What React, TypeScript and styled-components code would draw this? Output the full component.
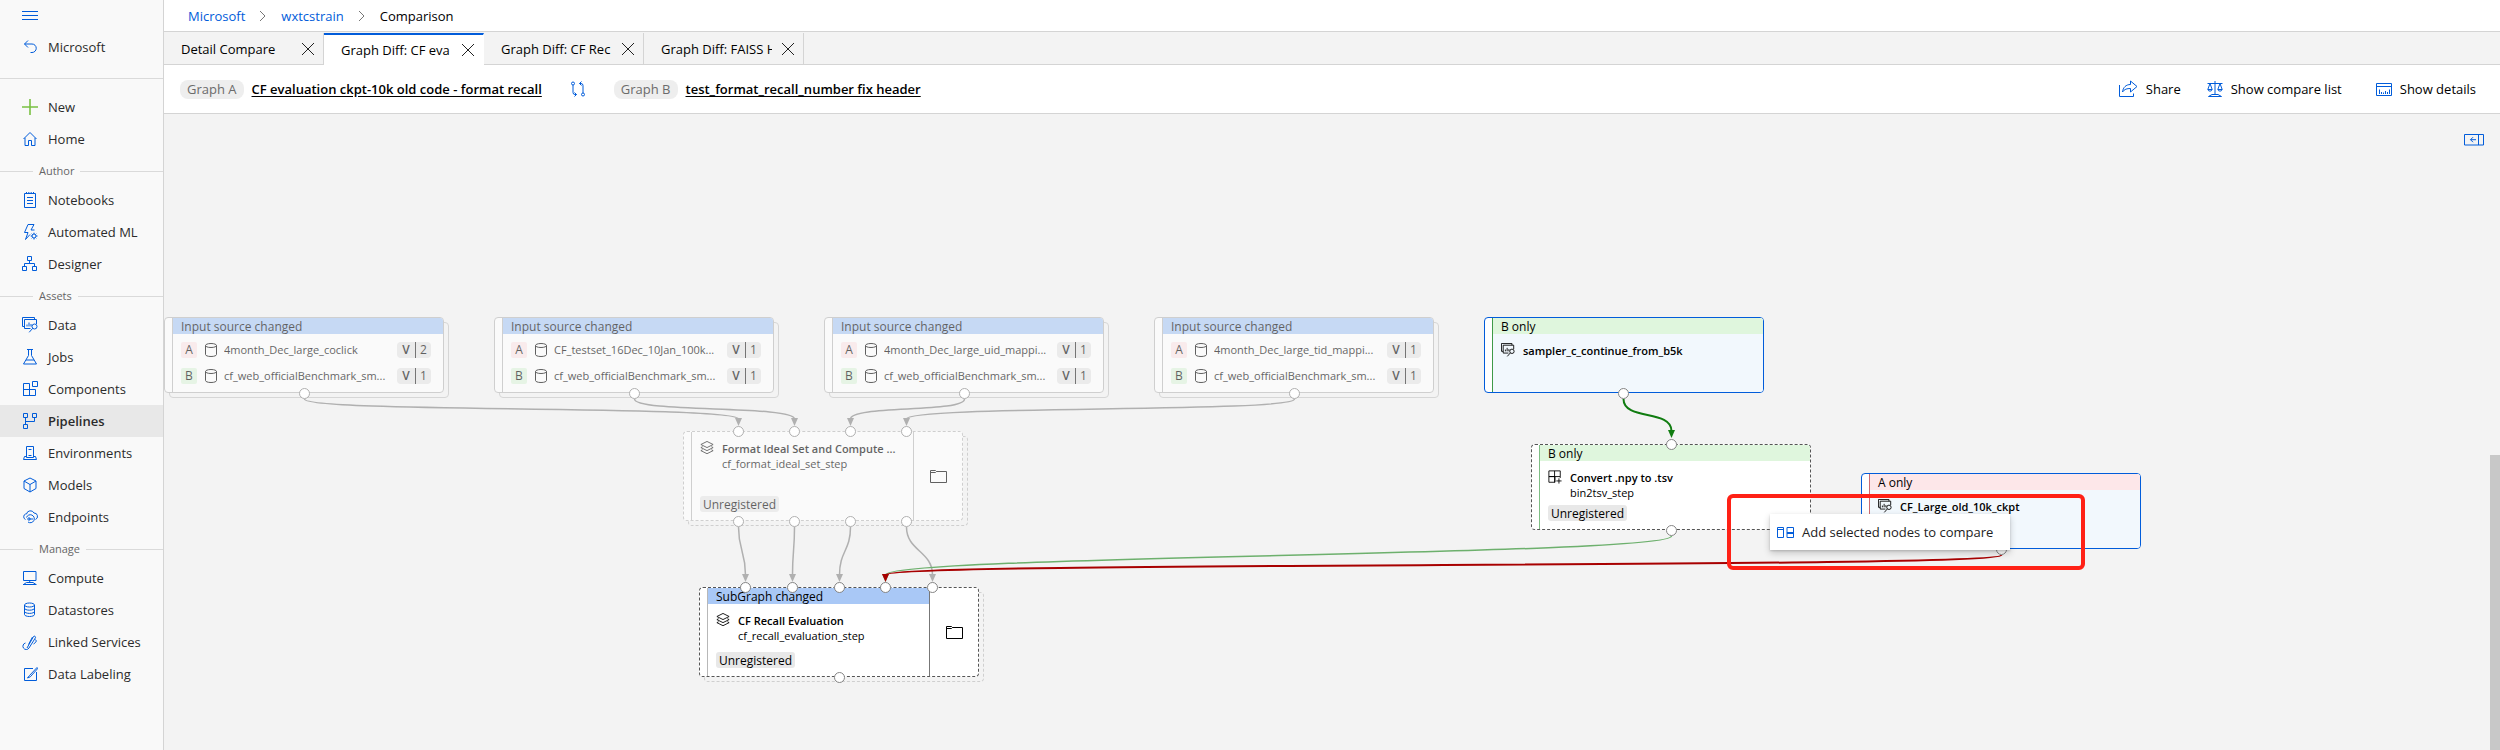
import React from "react";
import styled, { createGlobalStyle, css } from "styled-components";

const GlobalStyle = createGlobalStyle`
  *, *::before, *::after { box-sizing: border-box; }
  body {
    margin: 0;
    background: #f3f3f3;
    color: #000;
    font-family: "Segoe UI", "Open Sans", "Noto Sans", sans-serif;
    font-size: 13px;
    line-height: 20px;
  }
  a { color: inherit; text-decoration: none; }
  button {
    margin: 0;
    padding: 0;
    border: 0;
    background: none;
    color: inherit;
    font: inherit;
    cursor: pointer;
  }
  svg { display: block; flex: none; }
`;

/* ---------- icons ---------- */

const glyphs: Record<string, React.ReactNode> = {
  menu: <path d="M0 3.5h16M0 7.5h16M0 11.5h16" />,
  back: <path d="M6 1.5 2.5 5 6 8.5M2.5 5H10a4 4 0 0 1 0 8.500H8.500" />,
  plus: <path d="M8 0v16M0 8h16" strokeWidth="1.600" />,
  home: <path d="M1.500 8 8 1.500 14.500 8M3 6.800v7.700h3.500V9.500h3v5H13V6.800" />,
  notebook: (
    <path d="M2.500 1.500h11v14h-11zM4.500 0v2M6.800 0v2M9.200 0v2M11.500 0v2M5 5.500h6M5 8.500h6M5 11.500h6" />
  ),
  bolt: (
    <>
      <path d="M6 .5h6L9 6h3.500M6 .5 2.500 8.500H6L3.500 15.500 8 10.500" />
      <circle cx="12" cy="12" r="2" />
      <path d="M12 8.700v1.300M12 14v1.500M8.700 12H10M14 12h1.500M9.700 9.700l.8.8M13.500 13.500l.8.8M14.300 9.700l-.8.8M10.500 13.500l-.8.8" />
    </>
  ),
  designer: (
    <path d="M5.500.5h4v4h-4zM.5 10.500h4v4h-4zM10.500 10.500h4v4h-4zM7.500 4.500v3M2.500 10.500v-3h10v3" />
  ),
  data: (
    <>
      <path d="M2.500 9.500h-2v-9h12v2" />
      <path d="M8.500 11.500h-6v-9h12v4.500M5 9.500V7.500M7 9.500V5.500M9 9.500V7" />
      <circle cx="12.500" cy="9.500" r="2.500" />
      <path d="m10.700 11.300-3.500 4" />
    </>
  ),
  flask: <path d="M5 .5h6M6.500.5v6L1.500 15h13L9.500 6.500v-6M4 11h8" />,
  components: <path d="M1.500 2.500h6v12h-6zM1.500 8.500h12v6h-12zM10.500.5h5v5h-5z" />,
  pipelines: (
    <path d="M1.500.5h4v4h-4zM10.500.5h4v4h-4zM1.500 11.500h4v4h-4zM3.500 4.500v7M12.500 4.500v4h-9" />
  ),
  server: <path d="M4.500 1.500h7v11h-7zM6.500 4.500h3M6.500 10.500h3M4.500 11.500h-2l-1 3h13l-1-3h-2" />,
  cube: <path d="M8 1 14 4v7.500L8 15l-6-3.500V4zM2 4l6 3.500L14 4M8 7.500V15" />,
  cloud: (
    <>
      <path d="M3.500 10.500a3 3 0 0 1 0-5.500h1a4 4 0 0 1 7.500-1 3.400 3.400 0 0 1 1.500 6.500" />
      <path d="M4.500 8.500a4 4 0 1 1 1.500 4.500" />
      <circle cx="7" cy="10" r="1.200" />
      <path d="M7 10h4" />
    </>
  ),
  compute: <path d="M1.500 1.500h12.500v9H1.500zM7.700 10.500v2M1.500 14.500l3-2h6.500l3 2M1 14.500h13.500" />,
  datastore: (
    <path d="M2.500 3c0-1 2-2 5-2s5 1 5 2-2 2-5 2-5-1-5-2v9.500c0 1 2 2 5 2s5-1 5-2V3M2.500 6.200c0 1 2 2 5 2s5-1 5-2M2.500 9.400c0 1 2 2 5 2s5-1 5-2" />
  ),
  link: (
    <>
      <path d="M5 14 11.500 2.500a1.200 1.200 0 0 1 2 1.200L7 14a3.300 3.300 0 1 1-3.500-5" />
      <path d="M6.500 10.500 10.500 3M11.500 10l2-1.500a2 2 0 0 0 0-3" />
    </>
  ),
  label: <path d="M11 2.500H2.500v12h12V6M15 1.500l-7.500 8-2 2.500 2.800-1.200 7.200-8z" />,
  swap: (
    <>
      <circle cx="3" cy="2.500" r="1.500" />
      <circle cx="13" cy="13.500" r="1.500" />
      <path d="M3 4v7.500q0 2 2 2h1.500M4.500 11.500l2 2-2 2M13 12V4.500q0-2-2-2H9.500M11.500.5l-2 2 2 2" />
    </>
  ),
  scale: (
    <path d="M8 0v14M.5 2.500h15M3 2.500.8 8.500a2.300 2.300 0 0 0 4.400 0zM13 2.500l-2.200 6a2.300 2.300 0 0 0 4.400 0zM1 8.500h4M11 8.500h4M5 13.500 1.500 15.500h13L11 13.500z" />
  ),
  details: (
    <path d="M.5 2.500h15v12H.5zM.5 5.500h15M3.500 13V8.500M5.500 13v-2M7.500 13v-1.500M9.500 13v-3M11.500 13v-2M13.500 13V8.500" />
  ),
  close: <path d="m2 2 12 12M14 2 2 14" />,
  chevron: <path d="m5 3 5 5-5 5" />,
  cylinder: (
    <path d="M2.500 3.500c0-1 2-2 5.500-2s5.500 1 5.500 2-2 2-5.500 2-5.500-1-5.500-2v9c0 1 2 2 5.500 2s5.500-1 5.500-2v-9" />
  ),
  layers: (
    <path d="m8 .5 7 3.500-7 3.500L1 4zM3 6.500 1 7.500l7 3.500 7-3.500-2-1M3 10l-2 1 7 3.500L15 11l-2-1" />
  ),
  component: <path d="M1 1h13v6.500H1zM1 7.500h7V14H1zM7.500 1v13M14 7.500v1.500M12.500 9.500v6M9.500 12.500h6" />,
};

const Icon = ({ name, size = 16 }: { name: string; size?: number }) => (
  <svg width={size} height={size} viewBox="0 0 16 16" fill="none" stroke="currentColor" aria-hidden="true">
    {glyphs[name]}
  </svg>
);

const ShareIcon = () => (
  <svg width="20" height="18" viewBox="0 0 20 18" fill="none" stroke="currentColor" aria-hidden="true">
    <path d="M1.500 5v11.500h14v-3M4.500 12c.5-4.500 3.500-7.500 8-7.500V1L19 6.500 12.500 12V8.500c-3.500 0-6 .5-8 3.500z" />
  </svg>
);

const DockIcon = () => (
  <svg width="20" height="12" viewBox="0 0 20 12" fill="none" stroke="currentColor" aria-hidden="true">
    <path d="M.5.5h19v10.500H.5zM14.500.5v10.500M12 5.700H6.500M9 3.200 6.500 5.700 9 8.200" />
  </svg>
);

const CompareIcon = () => (
  <svg width="17" height="11" viewBox="0 0 17 11" fill="none" stroke="currentColor" aria-hidden="true">
    <path d="M.5.5h6v10h-6zM.5 2.500h6M10 .5h6.500v10H10zM10 5.500h6.500M10 6.500h6.500" />
  </svg>
);

const FolderIcon = () => (
  <svg width="17" height="13" viewBox="0 0 17 13" fill="none" stroke="currentColor" aria-hidden="true">
    <path d="M.5 12.500V.5h5l1 1h10v11zM.5 2.500h5l1-1" />
  </svg>
);

/* ---------- page frame ---------- */

const Page = styled.div`
  display: flex;
  min-height: 100vh;
`;

const Sidebar = styled.nav`
  flex: none;
  width: 164px;
  background: #f9f9f9;
  border-right: 1px solid #d4d4d4;
  color: #2b2b2b;
`;

const navRow = css`
  display: flex;
  align-items: center;
  gap: 10px;
  width: 100%;
  height: 32px;
  padding-left: 22px;
`;

const MenuToggle = styled.button`
  ${navRow}
  height: 31px;
  color: #015cda;
`;

const NavLink = styled.a<{ $current?: boolean; $accent?: string }>`
  ${navRow}
  font-weight: ${(p) => (p.$current ? 600 : 400)};
  background: ${(p) => (p.$current ? "#e8e8e8" : "transparent")};
  svg { color: ${(p) => p.$accent || "#015cda"}; }
`;

const NavRule = styled.hr`
  height: 1px;
  margin: 15px 0 12px;
  border: 0;
  background: #dadada;
`;

const NavGroup = styled.h2`
  display: flex;
  align-items: center;
  gap: 6px;
  height: 29px;
  margin: 0;
  padding-top: 3px;
  font-size: 11px;
  font-weight: 400;
  color: #666;
  &::before, &::after { content: ""; height: 1px; background: #dadada; }
  &::before { width: 33px; }
  &::after { flex: 1; }
`;

const Main = styled.main`
  display: flex;
  flex: 1;
  flex-direction: column;
  min-width: 0;
`;

const Breadcrumb = styled.nav`
  display: flex;
  align-items: center;
  gap: 10px;
  height: 32px;
  padding-left: 24px;
  background: #fff;
  border-bottom: 1px solid #d4d4d4;
  a { color: #015cda; }
  svg { color: #777; }
`;

const TabStrip = styled.div`
  display: flex;
  height: 33px;
  padding-top: 1px;
  background: #f3f3f3;
  border-bottom: 1px solid #d4d4d4;
`;

const Tab = styled.div<{ $active?: boolean }>`
  display: flex;
  align-items: center;
  justify-content: space-between;
  width: 160px;
  height: 32px;
  padding: 0 7px 0 17px;
  border-right: 1px solid #d4d4d4;
  ${(p) =>
    p.$active &&
    css`
      background: #fff;
      border-top: 2px solid #015cda;
      border-right-color: #fff;
    `}
`;

const TabLabel = styled.button`
  width: 111px;
  overflow: hidden;
  text-align: left;
  white-space: nowrap;
`;

const CloseButton = styled.button`
  color: #222;
`;

const Toolbar = styled.header`
  display: flex;
  align-items: center;
  height: 49px;
  padding: 0 24px 0 16px;
  background: #fff;
  border-bottom: 1px solid #d4d4d4;
`;

const GraphTag = styled.span`
  height: 19px;
  margin-right: 8px;
  padding: 0 7px;
  border-radius: 8px;
  background: #eee;
  color: #6b6b6b;
  line-height: 19px;
`;

const GraphName = styled.a`
  font-weight: 600;
  text-decoration: underline;
  text-underline-offset: 2px;
`;

const SwapButton = styled.button`
  margin: 0 28px;
  color: #015cda;
`;

const Actions = styled.div`
  display: flex;
  gap: 26px;
  margin-left: auto;
`;

const ActionButton = styled.button`
  display: flex;
  align-items: center;
  gap: 8px;
  svg { color: #015cda; }
  &:last-child { margin-left: 8px; }
`;

/* ---------- graph canvas ---------- */

const Canvas = styled.section`
  position: relative;
  flex: 1;
  min-height: 636px;
  overflow: hidden;
  background: #f3f3f3;
`;

const Edges = styled.svg`
  position: absolute;
  inset: 0;
  width: 100%;
  height: 100%;
`;

const DockButton = styled.button`
  position: absolute;
  top: 20px;
  right: 16px;
  color: #015cda;
`;

const ScrollThumb = styled.div`
  position: absolute;
  top: 341px;
  right: 0;
  bottom: 0;
  width: 10px;
  background: #c8c8c8;
`;

type Look = "plain" | "step" | "selected";

const NodeFrame = styled.article<{ $x: number; $y: number; $h: number }>`
  position: absolute;
  left: ${(p) => p.$x}px;
  top: ${(p) => p.$y}px;
  width: 280px;
  height: ${(p) => p.$h}px;
  font-size: 11px;
  line-height: 16px;
`;

const NodeShadow = styled.div<{ $dashed: boolean }>`
  position: absolute;
  inset: 5px -5px -5px 5px;
  border: ${(p) => (p.$dashed ? "1px dashed #cfcfcf" : "1px solid #d6d6d6")};
  border-radius: 4px;
`;

const borders: Record<Look, string> = {
  plain: "1px solid #b8b8b8",
  step: "1px dashed #555",
  selected: "1px solid #015cda",
};

const NodeCard = styled.div<{ $look: Look; $muted?: boolean; $accent: string }>`
  position: relative;
  display: flex;
  height: 100%;
  overflow: hidden;
  border: ${(p) => (p.$muted && p.$look === "step" ? "1px dashed #b8b8b8" : borders[p.$look])};
  border-radius: 4px;
  background: #fff;
  opacity: ${(p) => (p.$muted ? 0.6 : 1)};
  &::before { content: ""; width: 8px; border-right: 1px solid ${(p) => p.$accent}; }
`;

const MutedBack = styled.div`
  position: absolute;
  inset: 0;
  border-radius: 4px;
  background: #f3f3f3;
`;

const NodeMain = styled.div<{ $selected: boolean }>`
  display: flex;
  flex: 1;
  flex-direction: column;
  min-width: 0;
  background: ${(p) => (p.$selected ? "#f2f8fd" : "transparent")};
`;

const NodeHeader = styled.h3<{ $tint: string }>`
  height: 16px;
  margin: 0;
  padding-left: 8px;
  background: ${(p) => p.$tint};
  font-size: 12px;
  font-weight: 400;
  line-height: 18px;
`;

const NodeBody = styled.div`
  display: flex;
  flex: 1;
  flex-direction: column;
  justify-content: space-between;
  padding: 9px 0 8px 8px;
`;

const Heading = styled.div`
  display: flex;
  gap: 8px;
  line-height: 15px;
  white-space: nowrap;
  strong { display: block; font-weight: 600; }
`;

const StatusTag = styled.span`
  align-self: flex-start;
  height: 16px;
  padding: 0 3px;
  border-radius: 3px;
  background: #e8e8e8;
  font-size: 12px;
  line-height: 18px;
`;

const SourceList = styled.div`
  display: grid;
  gap: 10px;
  padding: 8px 12px 0 8px;
`;

const SourceRow = styled.div`
  display: flex;
  align-items: center;
  height: 16px;
`;

const SideBadge = styled.span<{ $side: "A" | "B" }>`
  width: 16px;
  margin-right: 6px;
  border-radius: 2px;
  background: ${(p) => (p.$side === "A" ? "#fde7e9" : "#dff6dd")};
  font-size: 12px;
  text-align: center;
`;

const SourceName = styled.span`
  flex: 1;
  margin-left: 5px;
  overflow: hidden;
  white-space: nowrap;
`;

const Version = styled.span`
  display: flex;
  border-radius: 4px;
  background: #e6e6e6;
  font-size: 12px;
  b { width: 18px; text-align: center; font-weight: 600; }
  span { width: 16px; border-left: 1px solid #222; text-align: center; }
`;

const OpenPanel = styled.button<{ $muted?: boolean }>`
  display: flex;
  align-items: center;
  justify-content: center;
  width: 49px;
  border-left: 1px solid ${(p) => (p.$muted ? "#b8b8b8" : "#777")};
`;

const Port = styled.span<{ $x: number; $y: number; $muted?: boolean }>`
  position: absolute;
  left: ${(p) => p.$x - 5}px;
  top: ${(p) => p.$y - 5}px;
  width: 11px;
  height: 11px;
  border: 1px solid ${(p) => (p.$muted ? "#b0b0b0" : "#858585")};
  border-radius: 50%;
  background: #fff;
`;

const Selection = styled.div`
  position: absolute;
  left: 1563px;
  top: 380px;
  width: 358px;
  height: 76px;
  border: 4px solid #ff2116;
  border-radius: 6px;
`;

const ContextMenu = styled.div`
  position: absolute;
  left: 1606px;
  top: 400px;
  width: 240px;
  background: #fff;
  box-shadow: 0 3px 7px rgba(0, 0, 0, 0.2), 0 1px 2px rgba(0, 0, 0, 0.15);
  button {
    display: flex;
    align-items: center;
    gap: 8px;
    width: 100%;
    height: 36px;
    padding-left: 7px;
    color: #222;
  }
  svg { color: #015cda; }
`;

/* ---------- data ---------- */

type Source = { name: string; version: number };
type GraphNode = {
  x: number;
  y: number;
  h: number;
  look: Look;
  muted?: boolean;
  stacked?: boolean;
  header?: string;
  tint?: string;
  accent?: string;
  sources?: Source[];
  icon?: string;
  title?: string;
  step?: string;
  expandable?: boolean;
  inputs?: number[];
  outputs: number[];
};

const benchmark = { name: "cf_web_officialBenchmark_sm...", version: 1 };
const sourceNode = (x: number, name: string, version: number): GraphNode => ({
  x,
  y: 203,
  h: 76,
  look: "plain",
  muted: true,
  stacked: true,
  header: "Input source changed",
  tint: "#a9c8f6",
  sources: [{ name, version }, benchmark],
  outputs: [140],
});

const nodes: GraphNode[] = [
  sourceNode(0, "4month_Dec_large_coclick", 2),
  sourceNode(330, "CF_testset_16Dec_10Jan_100k...", 1),
  sourceNode(660, "4month_Dec_large_uid_mappi...", 1),
  sourceNode(990, "4month_Dec_large_tid_mappi...", 1),
  {
    x: 1320, y: 203, h: 76, look: "selected", header: "B only", tint: "#dff6dd", accent: "#3f9a48",
    icon: "data", title: "sampler_c_continue_from_b5k", outputs: [139],
  },
  {
    x: 1367, y: 330, h: 86, look: "step", header: "B only", tint: "#dff6dd", accent: "#7fbf85",
    icon: "component", title: "Convert .npy to .tsv", step: "bin2tsv_step", inputs: [140], outputs: [140],
  },
  {
    x: 1697, y: 359, h: 76, look: "selected", header: "A only", tint: "#fde7e9", accent: "#cc6a70",
    icon: "data", title: "CF_Large_old_10k_ckpt", outputs: [140],
  },
  {
    x: 519, y: 317, h: 90, look: "step", muted: true, stacked: true, icon: "layers",
    title: "Format Ideal Set and Compute ...", step: "cf_format_ideal_set_step", expandable: true,
    inputs: [55, 111, 167, 223], outputs: [55, 111, 167, 223],
  },
  {
    x: 535, y: 473, h: 90, look: "step", stacked: true, header: "SubGraph changed", tint: "#a9c8f6",
    icon: "layers", title: "CF Recall Evaluation", step: "cf_recall_evaluation_step", expandable: true,
    inputs: [46, 93, 140, 186, 233], outputs: [140],
  },
];

type Edge = { from: [number, number]; to: [number, number]; bend: number; color: string; width?: number };

const grey = "#b0b0b0";
const edges: Edge[] = [
  { from: [140, 285], to: [574, 305], bend: 14, color: grey },
  { from: [470, 285], to: [630, 305], bend: 14, color: grey },
  { from: [800, 285], to: [686, 305], bend: 14, color: grey },
  { from: [1130, 285], to: [742, 305], bend: 14, color: grey },
  { from: [574, 413], to: [581, 461], bend: 24, color: grey },
  { from: [630, 413], to: [628, 461], bend: 24, color: grey },
  { from: [686, 413], to: [675, 461], bend: 24, color: grey },
  { from: [742, 413], to: [768, 461], bend: 24, color: grey },
  { from: [1459, 285], to: [1507, 317], bend: 22, color: "#107c10", width: 2 },
  { from: [1507, 422], to: [721, 461], bend: 20, color: "#6db06d" },
  { from: [1837, 441], to: [721, 461], bend: 14, color: "#a80000", width: 2 },
];

const navGroups = [
  {
    label: "Author",
    items: [["notebook", "Notebooks"], ["bolt", "Automated ML"], ["designer", "Designer"]],
  },
  {
    label: "Assets",
    items: [
      ["data", "Data"], ["flask", "Jobs"], ["components", "Components"], ["pipelines", "Pipelines"],
      ["server", "Environments"], ["cube", "Models"], ["cloud", "Endpoints"],
    ],
  },
  {
    label: "Manage",
    items: [
      ["compute", "Compute"], ["datastore", "Datastores"], ["link", "Linked Services"], ["label", "Data Labeling"],
    ],
  },
];

const tabs = ["Detail Compare", "Graph Diff: CF eva", "Graph Diff: CF Rec", "Graph Diff: FAISS H"];

/* ---------- components ---------- */

const EdgeLine = ({ from, to, bend, color, width = 1.5 }: Edge) => (
  <g>
    <path
      d={`M${from[0] + 0.5} ${from[1]}C${from[0] + 0.5} ${from[1] + bend} ${to[0] + 0.5} ${to[1] - bend} ${to[0] + 0.5} ${to[1]}`}
      fill="none"
      stroke={color}
      strokeWidth={width}
    />
    <path d={`M${to[0] - 3} ${to[1] - 1}h7l-3.500 8z`} fill={color} />
  </g>
);

const NodeView = ({ node }: { node: GraphNode }) => (
  <NodeFrame $x={node.x} $y={node.y} $h={node.h}>
    {node.stacked && <NodeShadow $dashed={node.look === "step"} />}
    {node.muted && <MutedBack />}
    <NodeCard $look={node.look} $muted={node.muted} $accent={node.accent || "#b8b8b8"}>
      <NodeMain $selected={node.look === "selected"}>
        {node.header && <NodeHeader $tint={node.tint || "#fff"}>{node.header}</NodeHeader>}
        {node.sources ? (
          <SourceList>
            {node.sources.map((source, i) => (
              <SourceRow key={source.name}>
                <SideBadge $side={i ? "B" : "A"}>{i ? "B" : "A"}</SideBadge>
                <Icon name="cylinder" />
                <SourceName>{source.name}</SourceName>
                <Version>
                  <b>V</b>
                  <span>{source.version}</span>
                </Version>
              </SourceRow>
            ))}
          </SourceList>
        ) : (
          <NodeBody>
            <Heading>
              <Icon name={node.icon || "data"} size={14} />
              <div>
                <strong>{node.title}</strong>
                {node.step}
              </div>
            </Heading>
            {node.step && <StatusTag>Unregistered</StatusTag>}
          </NodeBody>
        )}
      </NodeMain>
      {node.expandable && (
        <OpenPanel $muted={node.muted} aria-label={`Open ${node.title}`}>
          <FolderIcon />
        </OpenPanel>
      )}
    </NodeCard>
    {(node.inputs || []).map((x) => (
      <Port key={`in${x}`} $x={x} $y={0} $muted={node.muted} />
    ))}
    {node.outputs.map((x) => (
      <Port key={`out${x}`} $x={x} $y={node.h} $muted={node.muted} />
    ))}
  </NodeFrame>
);

export default function App() {
  return (
    <Page>
      <GlobalStyle />
      <Sidebar aria-label="Workspace">
        <MenuToggle aria-label="Toggle navigation"><Icon name="menu" /></MenuToggle>
        <NavLink href="#back"><Icon name="back" />Microsoft</NavLink>
        <NavRule />
        <NavLink href="#new" $accent="#7ac143"><Icon name="plus" />New</NavLink>
        <NavLink href="#home"><Icon name="home" />Home</NavLink>
        {navGroups.map((group) => (
          <React.Fragment key={group.label}>
            <NavGroup>{group.label}</NavGroup>
            {group.items.map(([icon, label]) => (
              <NavLink key={label} href={`#${icon}`} $current={label === "Pipelines"}>
                <Icon name={icon} />
                {label}
              </NavLink>
            ))}
          </React.Fragment>
        ))}
      </Sidebar>
      <Main>
        <Breadcrumb aria-label="Breadcrumb">
          <a href="#microsoft">Microsoft</a>
          <Icon name="chevron" />
          <a href="#wxtcstrain">wxtcstrain</a>
          <Icon name="chevron" />
          <span>Comparison</span>
        </Breadcrumb>
        <TabStrip>
          {tabs.map((label, i) => (
            <Tab key={label} $active={i === 1}>
              <TabLabel>{label}</TabLabel>
              <CloseButton aria-label={`Close ${label}`}><Icon name="close" /></CloseButton>
            </Tab>
          ))}
        </TabStrip>
        <Toolbar>
          <GraphTag>Graph A</GraphTag>
          <GraphName href="#graph-a">CF evaluation ckpt-10k old code - format recall</GraphName>
          <SwapButton aria-label="Swap graphs"><Icon name="swap" /></SwapButton>
          <GraphTag>Graph B</GraphTag>
          <GraphName href="#graph-b">test_format_recall_number fix header</GraphName>
          <Actions>
            <ActionButton><ShareIcon />Share</ActionButton>
            <ActionButton><Icon name="scale" />Show compare list</ActionButton>
            <ActionButton><Icon name="details" />Show details</ActionButton>
          </Actions>
        </Toolbar>
        <Canvas aria-label="Graph comparison">
          <Edges aria-hidden="true">
            {edges.map((edge, i) => <EdgeLine key={i} {...edge} />)}
          </Edges>
          {nodes.map((node) => <NodeView key={`${node.x}-${node.y}`} node={node} />)}
          <Selection />
          <ContextMenu>
            <button><CompareIcon />Add selected nodes to compare</button>
          </ContextMenu>
          <DockButton aria-label="Expand panel"><DockIcon /></DockButton>
          <ScrollThumb />
        </Canvas>
      </Main>
    </Page>
  );
}
